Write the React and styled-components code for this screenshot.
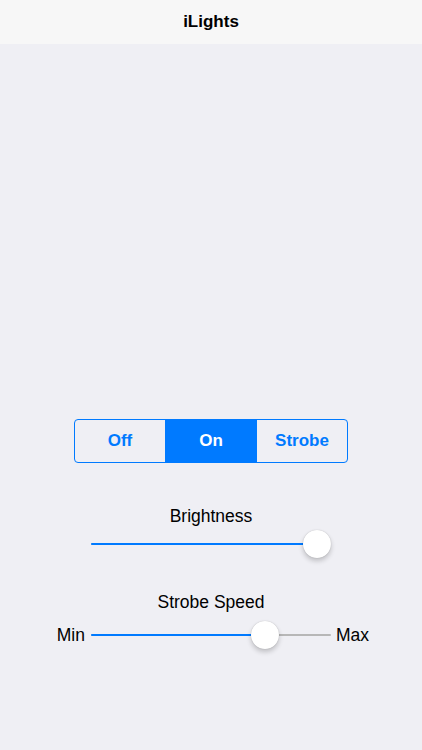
import React from "react";
import styled, { createGlobalStyle } from "styled-components";

const Global = createGlobalStyle`
  html, body { margin: 0; padding: 0; background: #efeff4; }
  body { font-family: "Liberation Sans", Arial, sans-serif; -webkit-font-smoothing: antialiased; }
  #root { min-height: 750px; }
`;

const Page = styled.div`
  display: flex;
  flex-direction: column;
  min-height: 750px;
  background: #efeff4;
`;

const NavBar = styled.header`
  height: 44px;
  background: #f7f7f7;
  display: flex;
  align-items: center;
  justify-content: center;
  flex-shrink: 0;
`;

const Title = styled.h1`
  margin: 0;
  font-size: 17px;
  font-weight: 700;
  color: #000;
`;

const Content = styled.main`
  display: flex;
  flex-direction: column;
  align-items: center;
  padding-top: 375px;
`;

const Segmented = styled.div`
  display: flex;
  width: 274px;
  height: 44px;
  box-sizing: border-box;
  border: 1px solid #007aff;
  border-radius: 4px;
  overflow: hidden;
`;

const Segment = styled.button`
  flex: 1;
  border: none;
  margin: 0;
  padding: 0;
  font-family: inherit;
  font-size: 17px;
  font-weight: 700;
  background: ${(p) => (p.$active ? "#007aff" : "transparent")};
  color: ${(p) => (p.$active ? "#fff" : "#007aff")};
  & + & { border-left: 1px solid #007aff; }
`;

const Label = styled.div`
  font-size: 17.5px;
  line-height: 20px;
  color: #000;
  margin-top: ${(p) => p.$mt}px;
`;

const SliderRow = styled.div`
  display: grid;
  grid-template-columns: 1fr 240px 1fr;
  column-gap: 5px;
  align-items: center;
  width: 100%;
  height: 28px;
  margin-top: ${(p) => p.$mt}px;
`;

const Side = styled.span`
  font-size: 17.5px;
  color: #000;
  justify-self: ${(p) => (p.$end ? "end" : "start")};
  margin-right: ${(p) => (p.$end ? "1px" : "0")};
`;

const Track = styled.div`
  position: relative;
  grid-column: 2;
  height: 2px;
  background: #b7b7b7;
  border-radius: 1px;
`;

const Fill = styled.div`
  position: absolute;
  left: 0;
  top: 0;
  height: 2px;
  background: #007aff;
  border-radius: 1px;
`;

const Thumb = styled.div`
  position: absolute;
  top: -13px;
  width: 28px;
  height: 28px;
  margin-left: -14px;
  border-radius: 50%;
  background: #fff;
  box-shadow: 0 3px 5px rgba(0, 0, 0, 0.2), 0 0 1px rgba(0, 0, 0, 0.25);
`;

function Slider({ value, min, max, mt }) {
  const center = 14 + value * (240 - 28);
  return (
    <SliderRow $mt={mt}>
      {min ? <Side $end>{min}</Side> : <span />}
      <Track>
        <Fill style={{ width: center }} />
        <Thumb style={{ left: center }} />
      </Track>
      {max ? <Side>{max}</Side> : <span />}
    </SliderRow>
  );
}

export default function App() {
  return (
    <Page>
      <Global />
      <NavBar>
        <Title>iLights</Title>
      </NavBar>
      <Content>
        <Segmented>
          <Segment>Off</Segment>
          <Segment $active>On</Segment>
          <Segment>Strobe</Segment>
        </Segmented>
        <Label $mt={43}>Brightness</Label>
        <Slider value={1} mt={4} />
        <Label $mt={34}>Strobe Speed</Label>
        <Slider value={0.755} min="Min" max="Max" mt={9} />
      </Content>
    </Page>
  );
}
